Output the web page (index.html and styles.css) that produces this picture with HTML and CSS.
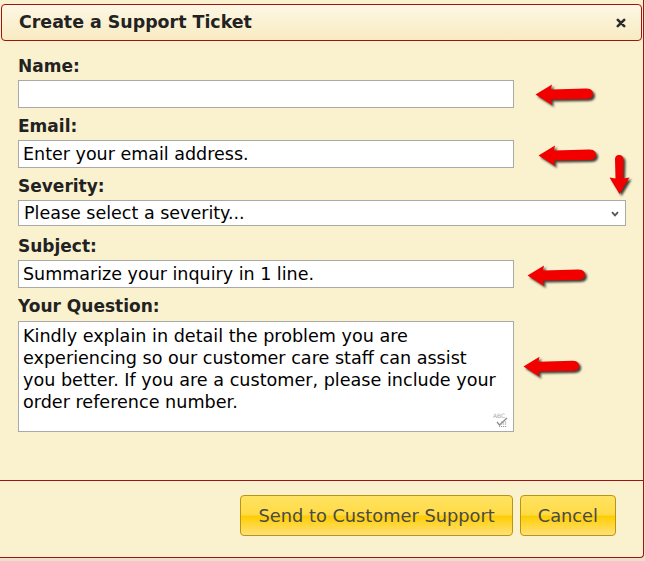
FILE: index.html
```html
<!DOCTYPE html>
<html lang="en">
<head>
<meta charset="utf-8">
<title>Create a Support Ticket</title>
<link rel="stylesheet" href="styles.css">
</head>
<body>
<div class="dialog">
  <div class="titlebar">
    <span class="title">Create a Support Ticket</span>
    <span class="close" aria-label="close">
      <svg width="10" height="10" viewBox="0 0 10 10"><path d="M1.8 1.8 L8.2 8.2 M8.2 1.8 L1.8 8.2" stroke="#2b2b2b" stroke-width="2.6" stroke-linecap="round"/></svg>
    </span>
  </div>

  <form class="form">
    <div class="field">
      <label class="label">Name:</label>
      <input class="input" type="text" value="">
    </div>
    <div class="field">
      <label class="label">Email:</label>
      <input class="input" type="text" value="Enter your email address.">
    </div>
    <div class="field">
      <label class="label">Severity:</label>
      <div class="select-wrap">
        <select class="select"><option>Please select a severity...</option></select>
        <svg class="chevron" width="8" height="6" viewBox="0 0 8 6"><path d="M1 1.2 L4 4.4 L7 1.2" fill="none" stroke="#555" stroke-width="1.8"/></svg>
      </div>
    </div>
    <div class="field field-after-select">
      <label class="label">Subject:</label>
      <input class="input" type="text" value="Summarize your inquiry in 1 line.">
    </div>
    <div class="field">
      <label class="label">Your Question:</label>
      <div class="textarea-wrap">
        <textarea class="textarea">Kindly explain in detail the problem you are
experiencing so our customer care staff can assist
you better. If you are a customer, please include your
order reference number.</textarea>
        <svg class="spell" width="16" height="16" viewBox="0 0 16 16">
          <text x="0" y="5.5" font-family="DejaVu Sans" font-size="6" fill="#aaa">ABC</text>
          <path d="M4 10 L6.5 13 L14 6" fill="none" stroke="#8c8c8c" stroke-width="1.3"/>
          <path d="M8 10h1.2M10 10h1.2M12 10h1.2M8 12h1.2M10 12h1.2M12 12h1.2M6 14.5h1.2M8 14.5h1.2M10 14.5h1.2M12 14.5h1.2" stroke="#999" stroke-width="1.2"/>
        </svg>
      </div>
    </div>
  </form>

  <div class="footer">
    <button class="btn" type="button">Send to Customer Support</button>
    <button class="btn" type="button">Cancel</button>
  </div>

  <svg class="arrow arrow-name" width="62" height="24" viewBox="0 0 62 24"><path d="M0.5 10.5 L17 0.5 L16 5.5 L51 4.5 C57 4.3 58 8 58 9.8 C58 12.5 56.5 15 51.5 15 L16 15.5 L17 21 Z" fill="#f20000"/></svg>
  <svg class="arrow arrow-email" width="62" height="24" viewBox="0 0 62 24"><path d="M0.5 10.5 L17 0.5 L16 5.5 L51 4.5 C57 4.3 58 8 58 9.8 C58 12.5 56.5 15 51.5 15 L16 15.5 L17 21 Z" fill="#f20000"/></svg>
  <svg class="arrow arrow-down" width="24" height="42" viewBox="0 0 24 42"><path d="M10.5 39 L0.5 22.5 L6.5 23.5 L6 5 C6 0.8 8 0 10 0 C12.3 0 14.5 1 14.5 5 L14 23.5 L20.5 22.5 Z" fill="#f20000"/></svg>
  <svg class="arrow arrow-subject" width="62" height="24" viewBox="0 0 62 24"><path d="M0.5 10.5 L17 0.5 L16 5.5 L51 4.5 C57 4.3 58 8 58 9.8 C58 12.5 56.5 15 51.5 15 L16 15.5 L17 21 Z" fill="#f20000"/></svg>
  <svg class="arrow arrow-question" width="60" height="24" viewBox="0 0 62 24"><path d="M0.5 10.5 L17 0.5 L16 5.5 L51 4.5 C57 4.3 58 8 58 9.8 C58 12.5 56.5 15 51.5 15 L16 15.5 L17 21 Z" fill="#f20000"/></svg>
</div>
</body>
</html>
```
FILE: styles.css
```css
html, body {
  margin: 0;
  padding: 0;
  background: #e7e0ca;
}

body {
  font-family: "DejaVu Sans", Verdana, sans-serif;
  color: #222;
}

.dialog {
  position: relative;
  box-sizing: border-box;
  width: 644px;
  height: 558px;
  padding: 4px 1px 0 1px;
  background: #faf1cf;
  border-right: 1px solid #a31212;
  border-bottom: 1px solid #a31212;
  border-bottom-right-radius: 4px;
  display: flex;
  flex-direction: column;
}

.titlebar {
  display: flex;
  align-items: center;
  justify-content: space-between;
  height: 35px;
  flex: none;
  padding: 0 15px 0 17px;
  border: 1px solid #a31212;
  border-radius: 4px;
  background: linear-gradient(#fdf7e4, #f8ebc2);
}

.title {
  font-size: 17.4px;
  font-weight: bold;
  line-height: 35px;
  color: #222;
}

.close {
  display: flex;
  width: 10px;
  height: 10px;
}

.form {
  display: flex;
  flex-direction: column;
  flex: 1;
  padding: 15px 0 0 17px;
  box-sizing: border-box;
}

.field {
  display: flex;
  flex-direction: column;
  align-items: flex-start;
  margin-bottom: 8px;
}

.field-after-select {
  margin-top: 2px;
}

.label {
  font-size: 17px;
  font-weight: bold;
  line-height: 20px;
  margin-bottom: 4px;
  color: #222;
}

.input {
  box-sizing: border-box;
  width: 496px;
  height: 28px;
  margin: 0;
  padding: 0 4px;
  border: 1px solid #a9a9a9;
  background: #fff;
  font-family: "DejaVu Sans", Verdana, sans-serif;
  font-size: 17.5px;
  color: #000;
  outline: none;
}

.select-wrap {
  position: relative;
  display: flex;
}

.select {
  box-sizing: border-box;
  width: 608px;
  height: 26px;
  margin: 0;
  padding: 0 5px;
  border: 1px solid #a9a9a9;
  border-radius: 0;
  background: #fff;
  appearance: none;
  -webkit-appearance: none;
  font-family: "DejaVu Sans", Verdana, sans-serif;
  font-size: 17.5px;
  color: #000;
  outline: none;
}

.chevron {
  position: absolute;
  right: 7px;
  top: 11px;
}

.textarea-wrap {
  position: relative;
  display: flex;
  margin-top: 1px;
}

.textarea {
  box-sizing: border-box;
  width: 496px;
  height: 111px;
  margin: 0;
  padding: 3px 4px;
  border: 1px solid #a9a9a9;
  background: #fff;
  font-family: "DejaVu Sans", Verdana, sans-serif;
  font-size: 17.6px;
  line-height: 22px;
  color: #000;
  resize: none;
  overflow: hidden;
  white-space: pre;
  outline: none;
}

.spell {
  position: absolute;
  right: 5px;
  bottom: 4px;
}

.footer {
  display: flex;
  flex: none;
  justify-content: flex-end;
  gap: 7px;
  margin: 0 -1px;
  padding: 14px 27px 0 0;
  border-top: 1px solid #a31212;
  height: 77px;
  box-sizing: border-box;
}

.btn {
  height: 41px;
  padding: 0 17px;
  border: 1px solid #b8960f;
  border-radius: 4px;
  background: linear-gradient(#ffe262 0%, #ffdb45 48%, #ffcc02 52%, #ffd633 72%, #ffe07a 100%);
  font-family: "DejaVu Sans", Verdana, sans-serif;
  font-size: 17.8px;
  color: #4a4a4a;
  cursor: pointer;
}

.arrow {
  position: absolute;
  filter: drop-shadow(2px 2px 1.2px rgba(0, 0, 0, 0.75));
}

.arrow-name { left: 535px; top: 84px; }
.arrow-email { left: 538px; top: 145px; }
.arrow-down { left: 609px; top: 155px; }
.arrow-subject { left: 527px; top: 265px; }
.arrow-question { left: 523px; top: 356px; }
```
